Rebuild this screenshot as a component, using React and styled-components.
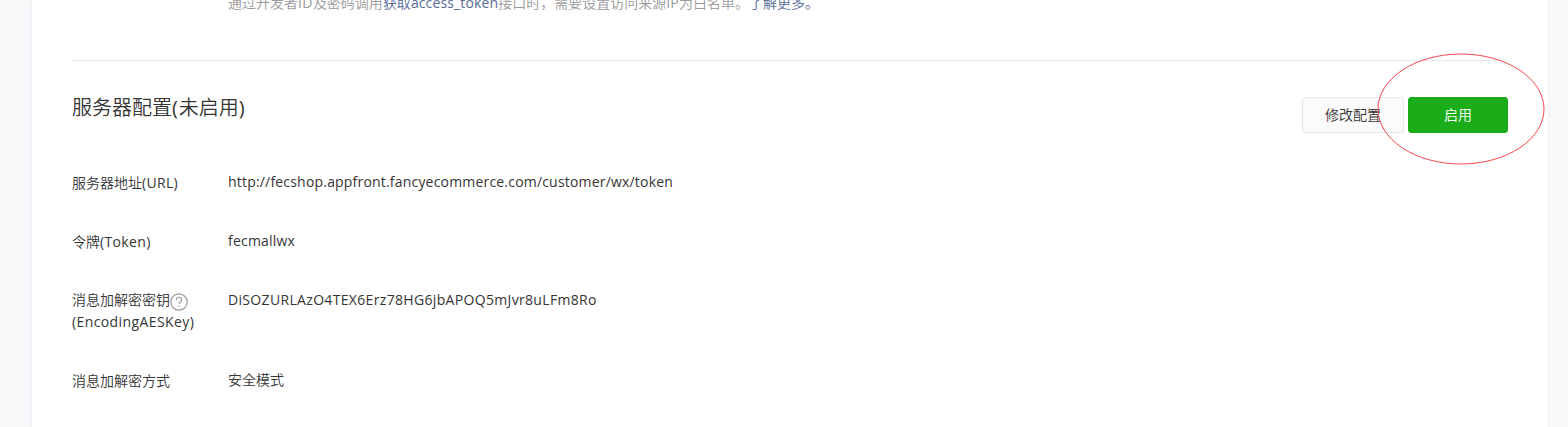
import React from 'react';
import styled, { createGlobalStyle } from 'styled-components';

const GlobalStyle = createGlobalStyle`
  * { box-sizing: border-box; }
  body {
    margin: 0;
    background: #f6f8fa;
    color: #353535;
    font: 350 14px/22px "Open Sans", "Noto Sans CJK SC", sans-serif;
  }
`;

const Page = styled.div`
  height: 427px;
  padding: 0 20px 0 32px;
  background: #f6f8fa;
  overflow: hidden;
`;

const Panel = styled.main`
  position: relative;
  height: 427px;
  padding: 0 40px;
  background: #fff;
  box-shadow: 0 0 3px #e9ebee;
`;

const Hint = styled.p`
  display: flow-root;
  height: 60px;
  margin: 0;
  padding-left: 156px;
  color: #9a9a9a;
  white-space: nowrap;

  & > span { display: block; margin-top: -8px; }
`;

const HintLink = styled.a`
  color: #576b95;
`;

const Latin = styled.span`
  font-weight: 400;
  letter-spacing: ${(p) => p.$track || 0}px;
`;

const Header = styled.header`
  display: flex;
  justify-content: space-between;
  align-items: flex-start;
  height: 111px;
  padding-top: 36px;
  border-top: 1px solid #e4e8eb;
`;

const Title = styled.h2`
  margin: -4px 0 0;
  font-size: 20px;
  line-height: 30px;
  font-weight: 350;
`;

const Actions = styled.div`
  display: flex;
  gap: 4px;
`;

const Button = styled.button`
  width: ${(p) => (p.$primary ? 100 : 102)}px;
  height: 36px;
  padding: 0;
  border: 1px solid ${(p) => (p.$primary ? '#1aad19' : '#e4e8eb')};
  border-radius: 3px;
  background: ${(p) => (p.$primary ? '#1aad19' : '#fbfbfb')};
  color: ${(p) => (p.$primary ? '#fff' : '#353535')};
  font: inherit;
`;

const Fields = styled.dl`
  display: flex;
  flex-direction: column;
  gap: 37px;
  margin: 0;
`;

const Field = styled.div`
  display: flex;
`;

const Label = styled.dt`
  width: 156px;
  padding-top: ${(p) => (p.$tall ? 0 : 1)}px;
  margin-bottom: -1px;
  white-space: nowrap;
`;

const Value = styled.dd`
  margin: 0;
  white-space: nowrap;
`;

const HelpIcon = styled.svg`
  width: 18px;
  height: 18px;
  margin: 0 0 -6px;
  vertical-align: baseline;
`;

const Marker = styled.svg`
  position: absolute;
  top: 53px;
  left: 1345px;
  width: 168px;
  height: 112px;
  pointer-events: none;
`;

export default function App() {
  return (
    <>
      <GlobalStyle />
      <Page>
        <Panel>
          <Hint>
            <span>
              通过开发者<Latin $track={0.4}>ID</Latin>及密码调用
              <HintLink>获取<Latin $track={0.13}>access_token</Latin></HintLink>
              接口时，需要设置访问来源<Latin $track={0.2}>IP</Latin>为白名单。<HintLink>了解更多。</HintLink>
            </span>
          </Hint>
          <Header>
            <Title>服务器配置<Latin $track={0.8}>(</Latin>未启用<Latin>)</Latin></Title>
            <Actions>
              <Button>修改配置</Button>
              <Button $primary>启用</Button>
            </Actions>
          </Header>
          <Fields>
            <Field>
              <Label>服务器地址<Latin $track={0.3}>(URL)</Latin></Label>
              <Value><Latin $track={0.19}>http://fecshop.appfront.fancyecommerce.com/customer/wx/token</Latin></Value>
            </Field>
            <Field>
              <Label>令牌<Latin $track={0.35}>(Token)</Latin></Label>
              <Value><Latin $track={0.2}>fecmallwx</Latin></Value>
            </Field>
            <Field>
              <Label $tall>
                消息加解密密钥
                <HelpIcon viewBox="0 0 18 18" fill="none" stroke="#9a9a9a">
                  <circle cx="9" cy="9" r="8.2" strokeWidth="1.2" />
                  <path d="M6.3 7c0-1.7 1.1-2.7 2.7-2.7s2.7 1 2.7 2.5c0 1.9-2.6 2-2.6 4.1" strokeWidth="1.1" />
                  <path d="M9.1 12.2v1.4" strokeWidth="1.2" />
                </HelpIcon>
                <br />
                <Latin $track={0.4}>(EncodingAESKey)</Latin>
              </Label>
              <Value><Latin $track={0.33}>DiSOZURLAzO4TEX6Erz78HG6jbAPOQ5mJvr8uLFm8Ro</Latin></Value>
            </Field>
            <Field>
              <Label>消息加解密方式</Label>
              <Value>安全模式</Value>
            </Field>
          </Fields>
          <Marker viewBox="0 0 168 112" fill="none" stroke="#f5474b">
            <ellipse cx="84" cy="56" rx="83" ry="55" />
          </Marker>
        </Panel>
      </Page>
    </>
  );
}
